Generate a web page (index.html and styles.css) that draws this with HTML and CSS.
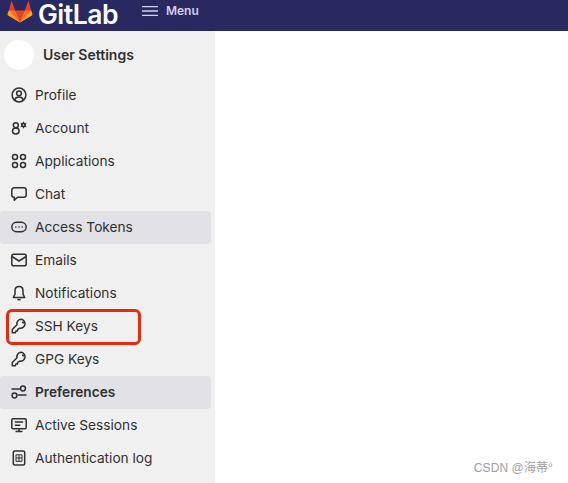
FILE: index.html
```html
<!DOCTYPE html>
<html lang="en">
<head>
    <meta charset="UTF-8">
    <title>User Settings</title>
    <link rel="stylesheet" href="styles.css">
</head>
<body>
    <header class="navbar">
        <svg class="logo" viewBox="0 0 26 25" width="26" height="25">
            <path fill="#e24329" d="M13 24.500 1.200 15.200 4.600 2.500l3.600 10h9.600l3.600-10 3.400 12.700z"/>
            <path fill="#fc6d26" d="M13 24.500 8.200 12.500H1.900L1.200 15.200z"/>
            <path fill="#fc6d26" d="M13 24.500l4.800-12h6.300l.7 2.700z"/>
            <path fill="#fca326" d="M1.900 12.500 0.600 15.800c-.2.600 0 1.200.5 1.600L13 24.500 6 17z"/>
            <path fill="#fca326" d="M24.100 12.500l1.300 3.300c.2.600 0 1.200-.5 1.600L13 24.500 20 17z"/>
        </svg>
        <span class="brand">GitLab</span>
        <svg class="menu-icon" viewBox="0 0 16 10" width="16" height="10">
            <path d="M0 .7h16M0 5h16M0 9.300h16" stroke="#d2d2ee" stroke-width="1.300" fill="none"/>
        </svg>
        <span class="menu-label">Menu</span>
    </header>

    <div class="layout">
        <aside class="sidebar">
            <div class="context">
                <div class="avatar"></div>
                <span class="context-title">User Settings</span>
            </div>
            <nav class="nav-list">
                <a class="nav-item">
                    <svg class="icon" viewBox="0 0 16 16"><circle cx="8" cy="8" r="6.900"/><circle cx="8" cy="6.300" r="2.400"/><path d="M3.500 13c.8-2 2.500-3 4.500-3s3.700 1 4.500 3"/></svg>
                    Profile
                </a>
                <a class="nav-item">
                    <svg class="icon" viewBox="0 0 16 16"><circle cx="4.800" cy="5.300" r="2.500"/><path d="M4.800 8c-2 0-3.300 1.300-3.300 3.100 0 1.700 1.300 2.900 3.300 2.900s3.300-1.200 3.300-2.900C8.100 9.300 6.800 8 4.800 8z"/><circle class="solid" cx="12.500" cy="5" r="2.500"/><path class="thin" d="M12.500 1.700v6.600M9.600 3.300l5.800 3.400M15.400 3.300 9.600 6.700"/><circle class="hole" cx="12.500" cy="5" r=".8"/></svg>
                    Account
                </a>
                <a class="nav-item">
                    <svg class="icon" viewBox="0 0 16 16"><circle cx="4" cy="4" r="2.500"/><circle cx="12" cy="4" r="2.500"/><circle cx="4" cy="12" r="2.500"/><circle cx="12" cy="12" r="2.500"/></svg>
                    Applications
                </a>
                <a class="nav-item">
                    <svg class="icon" viewBox="0 0 16 16"><path d="M3 1.800h10a2.200 2.200 0 0 1 2.200 2.200v5a2.200 2.200 0 0 1-2.200 2.200H6.500L3.300 14.300v-3.100H3A2.200 2.200 0 0 1 .8 9V4A2.200 2.200 0 0 1 3 1.800z"/></svg>
                    Chat
                </a>
                <a class="nav-item is-hover">
                    <svg class="icon" viewBox="0 0 16 16"><rect x=".8" y="3.300" width="14.400" height="9.400" rx="4.700"/><path class="dots" d="M4.800 8h.01M8 8h.01M11.200 8h.01"/></svg>
                    Access Tokens
                </a>
                <a class="nav-item">
                    <svg class="icon" viewBox="0 0 16 16"><rect x=".8" y="2.300" width="14.400" height="11.400" rx="1.800"/><path d="M1 4.500 8 9l7-4.500"/></svg>
                    Emails
                </a>
                <a class="nav-item">
                    <svg class="icon" viewBox="0 0 16 16"><path d="M8 1.500c-2.500 0-4 1.900-4 4.300v3.400l-1.700 3.300h11.400L12 9.200V5.800c0-2.400-1.500-4.300-4-4.300z"/><path d="M6.300 14.600h3.400"/></svg>
                    Notifications
                </a>
                <a class="nav-item">
                    <svg class="icon" viewBox="0 0 16 16"><path d="M10.300 1.300a4.400 4.400 0 0 0-4.300 5.500L1.300 11.500v3.200h3l.6-1.700h1.500l.3-1.600 2.100-1.300a4.400 4.400 0 1 0 1.500-8.800z"/><path d="M11 4.200h1.300v1.300"/></svg>
                    SSH Keys
                </a>
                <a class="nav-item">
                    <svg class="icon" viewBox="0 0 16 16"><path d="M10.300 1.300a4.400 4.400 0 0 0-4.300 5.500L1.300 11.500v3.200h3l.6-1.700h1.500l.3-1.600 2.100-1.300a4.400 4.400 0 1 0 1.500-8.800z"/><path d="M11 4.200h1.300v1.300"/></svg>
                    GPG Keys
                </a>
                <a class="nav-item is-active">
                    <svg class="icon" viewBox="0 0 16 16"><circle cx="12" cy="4.500" r="2.400"/><circle cx="3.500" cy="11.500" r="2.400"/><path d="M.5 5h8.700M6.800 11h8.700"/></svg>
                    Preferences
                </a>
                <a class="nav-item">
                    <svg class="icon" viewBox="0 0 16 16"><rect x=".8" y="1.800" width="14.400" height="10" rx="1.200"/><path d="M3.800 5h8.400M3.800 8.200h5.600M8 12v2.500M4.500 14.500h7"/></svg>
                    Active Sessions
                </a>
                <a class="nav-item">
                    <svg class="icon" viewBox="0 0 16 16"><rect x="2.300" y="1" width="11.400" height="14" rx="1.500"/><path class="thin" d="M5 4.800h6v6.500H5zM8 4.800v6.500M5 8h6"/></svg>
                    Authentication log
                </a>
            </nav>
        </aside>
        <main class="content"></main>
    </div>

    <div class="callout"></div>
    <div class="watermark">CSDN @海蒂°</div>
</body>
</html>
```

FILE: styles.css
```css
* {
    margin: 0;
    padding: 0;
    box-sizing: border-box;
}

body {
    font-family: 'Inter', 'Noto Sans CJK SC', sans-serif;
    background: #fff;
    width: 568px;
    height: 483px;
    overflow: hidden;
    position: relative;
}

.navbar {
    height: 31px;
    background: #292961;
    display: flex;
    align-items: flex-end;
    overflow: hidden;
    padding-left: 7px;
}

.logo {
    flex: none;
    margin-bottom: 8px;
}

.brand {
    color: #fff;
    font-size: 26.5px;
    font-weight: 600;
    line-height: 28px;
    letter-spacing: -0.5px;
    margin-left: 5px;
    margin-bottom: 3px;
}

.menu-icon {
    margin-left: 24px;
    margin-bottom: 15px;
}

.menu-label {
    color: #d2d2ee;
    font-size: 12px;
    font-weight: 600;
    line-height: 16px;
    margin-left: 8px;
    margin-bottom: 12px;
}

.layout {
    display: flex;
    height: 452px;
}

.sidebar {
    width: 215px;
    background: #f0f0f0;
    padding-right: 4px;
}

.context {
    display: flex;
    align-items: center;
    height: 48px;
    padding-left: 4px;
}

.avatar {
    width: 30px;
    height: 30px;
    border-radius: 50%;
    background: #fff;
}

.context-title {
    margin-left: 9px;
    padding-bottom: 2px;
    font-size: 14px;
    font-weight: 600;
    color: #303030;
}

.nav-item {
    display: flex;
    align-items: center;
    height: 33px;
    padding-left: 11px;
    padding-bottom: 2px;
    font-size: 13.7px;
    color: #303030;
    border-radius: 4px;
}

.nav-item.is-hover {
    background: #e1e1e6;
}

.nav-item.is-active {
    background: #e1e1e6;
    font-weight: 600;
}

.icon {
    width: 16px;
    height: 16px;
    flex: none;
    margin-right: 8px;
    fill: none;
    stroke: #303030;
    stroke-width: 1.500;
    stroke-linejoin: round;
}

.icon .thin {
    stroke-width: 1;
}

.icon .solid {
    fill: #303030;
    stroke: none;
}

.icon .hole {
    fill: #f0f0f0;
    stroke: none;
}

.icon .dots {
    stroke-width: 1.600;
    stroke-linecap: round;
}

.content {
    flex: 1;
    background: #fff;
}

/* red box drawn over the screenshot */
.callout {
    position: absolute;
    left: 6px;
    top: 309px;
    width: 135px;
    height: 36px;
    border: 3px solid #e8290f;
    border-radius: 6px;
}

.watermark {
    position: absolute;
    right: 15px;
    bottom: 8px;
    font-family: 'Liberation Sans', 'Noto Sans CJK SC', sans-serif;
    font-size: 12px;
    letter-spacing: 0.1px;
    color: #a0a0a0;
}
```
